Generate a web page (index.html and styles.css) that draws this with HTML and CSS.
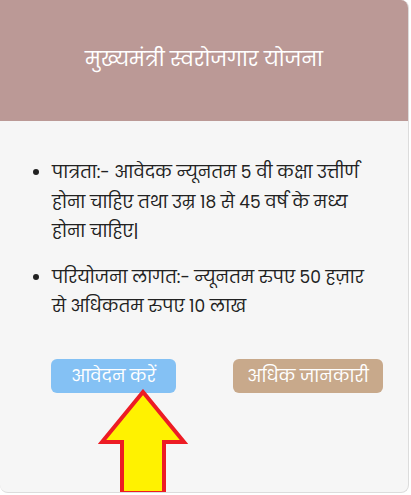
FILE: index.html
```html
<!DOCTYPE html>
<html lang="hi">
<head>
<meta charset="utf-8">
<link rel="stylesheet" href="styles.css">
</head>
<body>
<div class="card">
  <div class="card-head">
    <h2 class="title">मुख्यमंत्री स्वरोजगार योजना</h2>
  </div>
  <div class="card-body">
    <ul class="points">
      <li>पात्रता:- आवेदक न्यूनतम 5 वी कक्षा उत्तीर्ण होना चाहिए तथा उम्र 18 से 45 वर्ष के मध्य होना चाहिए|</li>
      <li>परियोजना लागत:- न्यूनतम रुपए 50 हज़ार से अधिकतम रुपए 10 लाख</li>
    </ul>
    <div class="actions">
      <a class="btn btn-apply">आवेदन करें</a>
      <a class="btn btn-info">अधिक जानकारी</a>
    </div>
  </div>
  <svg class="arrow" width="90" height="106" viewBox="0 0 90 106">
    <polygon points="45,3 86,53 66,53 66,104 24,104 24,53 4,53" fill="#fff200" stroke="#ed1c24" stroke-width="4" stroke-linejoin="miter"/>
  </svg>
</div>
</body>
</html>
```
FILE: styles.css
```css
html, body {
  margin: 0;
  padding: 0;
  background: #ffffff;
}
body {
  font-family: "Poppins", "Lato", "Noto Sans", "Noto Sans Devanagari", sans-serif;
}
.card {
  position: relative;
  width: 408px;
  height: 492px;
  background: #f6f6f6;
  border-right: 1px solid #dcdcdc;
  border-bottom: 1px solid #dcdcdc;
  border-radius: 0 8px 8px 8px;
  overflow: hidden;
  box-sizing: content-box;
}
.card-head {
  height: 121px;
  background: #bb9996;
  display: flex;
  align-items: center;
  justify-content: center;
}
.title {
  margin: 0 0 4px 0;
  color: #ffffff;
  font-size: 20px;
  font-weight: 400;
}
.card-body {
  padding: 37px 0 0 0;
}
.points {
  margin: 0;
  padding: 0 30px 0 52px;
  color: #222222;
  font-size: 17px;
  line-height: 29.5px;
}
.points li {
  margin-bottom: 16px;
}
.actions {
  display: flex;
  justify-content: space-between;
  padding: 21px 25px 0 51px;
}
.btn {
  display: inline-block;
  height: 34px;
  line-height: 34px;
  border-radius: 6px;
  color: #ffffff;
  font-size: 17px;
  text-align: center;
}
.btn-apply {
  width: 125px;
  background: #84c1f4;
}
.btn-info {
  width: 150px;
  background: #c8a98b;
}
.arrow {
  position: absolute;
  left: 98px;
  top: 389px;
}
```
